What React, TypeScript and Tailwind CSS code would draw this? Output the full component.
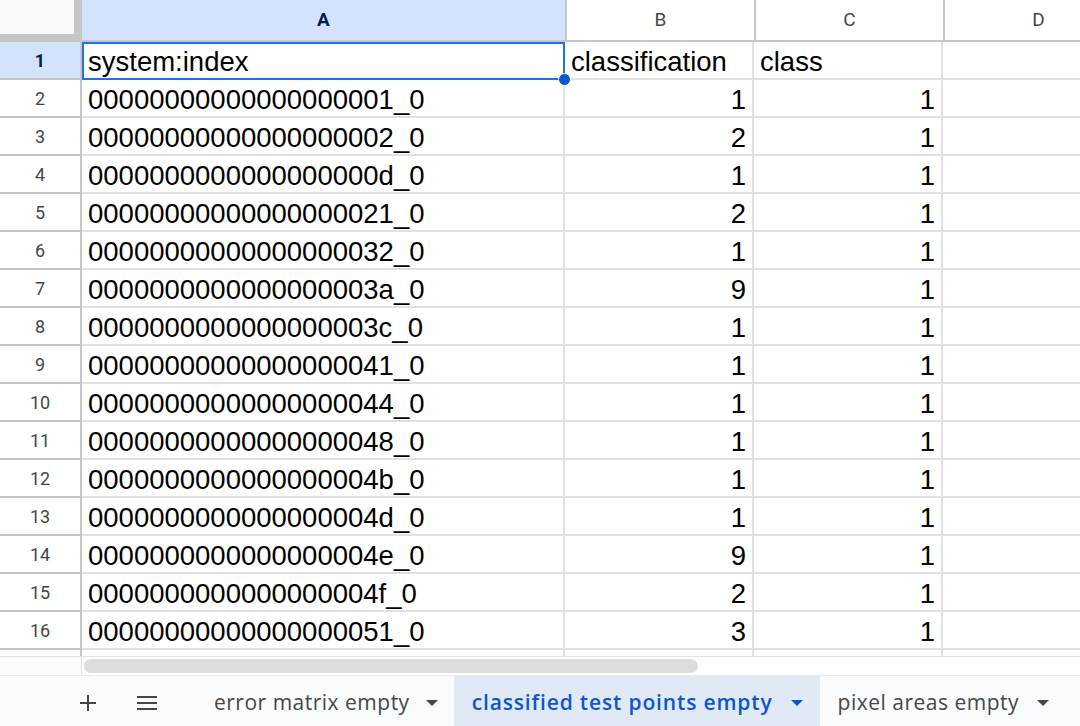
import React from "react";

const rows: [string, number, number][] = [
  ["00000000000000000001_0", 1, 1],
  ["00000000000000000002_0", 2, 1],
  ["0000000000000000000d_0", 1, 1],
  ["00000000000000000021_0", 2, 1],
  ["00000000000000000032_0", 1, 1],
  ["0000000000000000003a_0", 9, 1],
  ["0000000000000000003c_0", 1, 1],
  ["00000000000000000041_0", 1, 1],
  ["00000000000000000044_0", 1, 1],
  ["00000000000000000048_0", 1, 1],
  ["0000000000000000004b_0", 1, 1],
  ["0000000000000000004d_0", 1, 1],
  ["0000000000000000004e_0", 9, 1],
  ["0000000000000000004f_0", 2, 1],
  ["00000000000000000051_0", 3, 1],
];

function Caret({ className }: { className: string }) {
  return (
    <svg width="12" height="6" viewBox="0 0 12 6" className={className}>
      <path d="M0 0h12L6 6z" fill="currentColor" />
    </svg>
  );
}

function RowHead({ n, active }: { n: number; active?: boolean }) {
  return (
    <div
      className={`flex w-[82px] shrink-0 items-center justify-center border-r-2 border-b-2 border-[#c4c7c5] font-['Roboto',sans-serif] text-[18px] ${
        active ? "bg-[#d3e3fd] font-bold text-[#041e49]" : "bg-white text-[#444746]"
      }`}
    >
      {n}
    </div>
  );
}

function Cell({ w, children, right }: { w: string; children?: React.ReactNode; right?: boolean }) {
  return (
    <div
      className={`flex shrink-0 items-center overflow-hidden whitespace-nowrap border-r-2 border-b-2 border-[#e1e1e1] px-[6px] pt-[3px] ${w} ${
        right ? "justify-end" : ""
      }`}
    >
      {children}
    </div>
  );
}

export default function App() {
  return (
    <div className="flex h-[726px] w-[1080px] flex-col overflow-hidden bg-white font-['Liberation_Sans',Arial,sans-serif] text-[27.5px] text-black">
      {/* column headers */}
      <div className="flex h-[42px] shrink-0 font-['Roboto',sans-serif] text-[19px] text-[#444746]">
        <div className="w-[82px] shrink-0 border-r-[8px] border-b-[8px] border-[#c4c7c5] bg-[#f8f9fa]" />
        <div className="flex w-[483px] shrink-0 items-center justify-center border-b-2 border-[#c4c7c5] bg-[#d3e3fd] font-bold text-[#041e49]">
          A
        </div>
        <div className="flex w-[189px] shrink-0 items-center justify-center border-l-2 border-b-2 border-[#c4c7c5]">B</div>
        <div className="flex w-[189px] shrink-0 items-center justify-center border-l-2 border-b-2 border-[#c4c7c5]">C</div>
        <div className="flex w-[189px] shrink-0 items-center justify-center border-l-2 border-b-2 border-[#c4c7c5]">D</div>
      </div>

      {/* row 1 */}
      <div className="flex h-[38px] shrink-0">
        <RowHead n={1} active />
        <div className="relative flex w-[483px] shrink-0 items-center border-2 border-[#1a73e8] px-[4px] pt-[1px]">
          system:index
          <span className="absolute -right-[8px] -bottom-[8px] h-[13px] w-[13px] rounded-full border border-white bg-[#0b57d0]" />
        </div>
        <Cell w="w-[189px]">classification</Cell>
        <Cell w="w-[189px]">class</Cell>
        <Cell w="w-[189px]" />
      </div>

      {rows.map(([id, a, b], i) => (
        <div key={id} className="flex h-[38px] shrink-0">
          <RowHead n={i + 2} />
          <Cell w="w-[483px]">{id}</Cell>
          <Cell w="w-[189px]" right>
            {a}
          </Cell>
          <Cell w="w-[189px]" right>
            {b}
          </Cell>
          <Cell w="w-[189px]" />
        </div>
      ))}

      {/* partial row 17 */}
      <div className="flex h-[6px] shrink-0">
        <div className="w-[82px] shrink-0 border-r-2 border-[#c4c7c5]" />
        <div className="w-[483px] shrink-0 border-r-2 border-[#e1e1e1]" />
        <div className="w-[189px] shrink-0 border-r-2 border-[#e1e1e1]" />
        <div className="w-[189px] shrink-0 border-r-2 border-[#e1e1e1]" />
      </div>

      {/* horizontal scrollbar */}
      <div className="flex h-[19px] shrink-0 border-t border-[#e1e1e1]">
        <div className="w-[82px] shrink-0 border-r border-[#e1e1e1] bg-[#fbfbfb]" />
        <div className="flex flex-1 items-center pl-[2px]">
          <div className="h-[14px] w-[614px] rounded-full bg-[#dadce0]" />
        </div>
      </div>

      {/* sheet tabs */}
      <div className="flex flex-1 items-stretch border-t border-[#e8eaed] bg-[#f9fbfd] font-['Open_Sans',sans-serif] text-[21px] tracking-[0.5px] text-[#444746]">
        <div className="flex w-[176px] shrink-0 items-center pt-[4px]">
          <svg width="18" height="18" viewBox="0 0 18 18" className="ml-[79px] text-[#444746]">
            <path d="M9 1v16M1 9h16" stroke="currentColor" strokeWidth="2" />
          </svg>
          <svg width="22" height="16" viewBox="0 0 22 16" className="ml-[39px] text-[#444746]">
            <path d="M1 2h20M1 8h20M1 14h20" stroke="currentColor" strokeWidth="2.2" />
          </svg>
        </div>
        <div className="ml-[20px] flex items-center gap-[16px] pt-[4px] pr-[16px] pl-[18px]">
          <span>error matrix empty</span>
          <Caret className="text-[#444746]" />
        </div>
        <div className="flex items-center gap-[18px] bg-[#e1e9f7] pt-[4px] pr-[17px] pl-[18px] font-semibold tracking-[0.85px] text-[#0b57d0]">
          <span>classified test points empty</span>
          <Caret className="text-[#0b57d0]" />
        </div>
        <div className="flex items-center gap-[18px] pt-[4px] pr-[17px] pl-[18px]">
          <span>pixel areas empty</span>
          <Caret className="text-[#444746]" />
        </div>
      </div>
    </div>
  );
}
